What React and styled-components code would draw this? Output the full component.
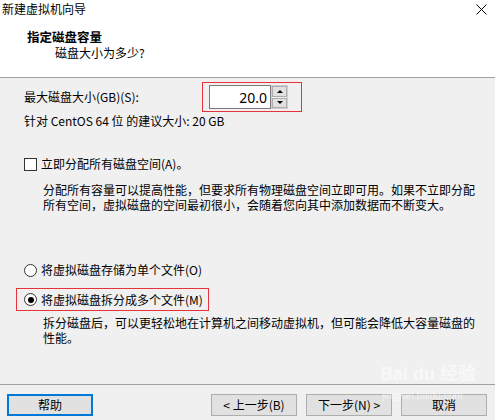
import React from "react";
import styled, { createGlobalStyle } from "styled-components";

const Global = createGlobalStyle`
  html, body { margin: 0; padding: 0; }
  body {
    background: #f0f0f0;
    font-family: "Noto Sans CJK SC", "Noto Sans", sans-serif;
    font-size: 12px;
    color: #000;
  }
`;

const Window = styled.div`
  position: relative;
  width: 495px;
  height: 420px;
  display: flex;
  flex-direction: column;
  background: #f0f0f0;
  overflow: hidden;
`;

const Header = styled.div`
  background: #fff;
  height: 77px;
  border-bottom: 1px solid #a0a0a0;
  display: flex;
  flex-direction: column;
`;

const TitleBar = styled.div`
  height: 18px;
  display: flex;
  align-items: center;
  justify-content: space-between;
  padding: 0 8px 0 2px;
  line-height: 18px;
`;

const CloseBtn = styled.svg`
  width: 11px;
  height: 11px;
`;

const HeaderTitle = styled.div`
  margin-top: 11px;
  padding-left: 27px;
  font-weight: bold;
  font-size: 12.5px;
  line-height: 16px;
`;

const HeaderSub = styled.div`
  padding-left: 55px;
  line-height: 16px;
`;

const Content = styled.div`
  flex: 1;
  display: flex;
  flex-direction: column;
`;

const SizeRow = styled.div`
  margin-top: 4px;
  height: 30px;
  display: flex;
  align-items: center;
  padding-left: 24px;
`;

const Label = styled.span`
  width: 178px;
  line-height: 16px;
`;

const Highlight = styled.div`
  border: 1px solid #e8323a;
  display: flex;
  align-items: center;
  box-sizing: border-box;
  height: ${(p) => p.$h}px;
  width: ${(p) => p.$w}px;
  padding-left: ${(p) => p.$pl}px;
  margin-left: ${(p) => p.$ml || 0}px;
  margin-top: ${(p) => p.$mt || 0}px;
`;

const NumInput = styled.div`
  box-sizing: border-box;
  width: 62px;
  height: 24px;
  border: 1px solid #7a7a7a;
  background: #fff;
  display: flex;
  align-items: center;
  justify-content: flex-end;
  padding-right: 3px;
  font-family: "Noto Sans", sans-serif;
  font-size: 14px;
`;

const Spinner = styled.div`
  display: flex;
  flex-direction: column;
  gap: 1px;
  width: 17px;
  height: 24px;
  box-sizing: border-box;
  border: 1px solid #cfcfcf;
  background: #f0f0f0;
`;

const SpinBtn = styled.div`
  flex: 1;
  background: #e1e1e1;
  border: 1px solid #adadad;
  display: flex;
  align-items: center;
  justify-content: center;
`;

const Tri = styled.div`
  width: 0;
  height: 0;
  border-left: 3px solid transparent;
  border-right: 3px solid transparent;
  ${(p) =>
    p.$up ? "border-bottom: 3px solid #000;" : "border-top: 3px solid #000;"}
`;

const Line = styled.div`
  margin-top: ${(p) => p.$mt || 0}px;
  padding-left: 24px;
  line-height: 16px;
`;

const OptionRow = styled.div`
  margin-top: ${(p) => p.$mt || 0}px;
  padding-left: ${(p) => (p.$pl === undefined ? 24 : p.$pl)}px;
  display: flex;
  align-items: center;
  gap: 4px;
  line-height: 16px;
`;

const Checkbox = styled.span`
  box-sizing: border-box;
  width: 13px;
  height: 13px;
  border: 1px solid #333;
  background: #fff;
`;

const Radio = styled.span`
  box-sizing: border-box;
  width: 13px;
  height: 13px;
  border: 1px solid #333;
  border-radius: 50%;
  background: #fff;
  display: flex;
  align-items: center;
  justify-content: center;
  &::after {
    content: "";
    width: 6px;
    height: 6px;
    border-radius: 50%;
    background: ${(p) => (p.$checked ? "#000" : "transparent")};
  }
`;

const Desc = styled.div`
  margin-top: ${(p) => p.$mt || 0}px;
  padding-left: 43px;
  line-height: 15px;
`;

const Footer = styled.div`
  margin-top: auto;
  border-top: 1px solid #a0a0a0;
  height: 36px;
  display: flex;
  padding: 9px 8px 0 7px;
  box-sizing: border-box;
  gap: 9px;
`;

const Button = styled.div`
  box-sizing: border-box;
  width: 86px;
  height: 22px;
  background: #e1e1e1;
  border: ${(p) => (p.$primary ? "2px solid #0078d7" : "1px solid #adadad")};
  display: flex;
  align-items: center;
  justify-content: center;
  line-height: 16px;
  white-space: nowrap;
  ${(p) => (p.$pushRight ? "margin-left: auto;" : "")}
`;

const Watermark = styled.div`
  position: absolute;
  left: 380px;
  top: 365px;
  color: rgba(255, 255, 255, 0.6);
  font-family: "Liberation Sans", "Noto Sans CJK SC", sans-serif;
  pointer-events: none;
  line-height: 1;
  white-space: nowrap;
`;

const WmMain = styled.div`
  font-size: 18px;
  font-weight: bold;
`;

const WmSub = styled.div`
  font-size: 10px;
  margin-top: 8px;
  margin-left: 2px;
`;

export default function App() {
  return (
    <Window>
      <Global />
      <Header>
        <TitleBar>
          <span>新建虚拟机向导</span>
          <CloseBtn viewBox="0 0 11 11">
            <path d="M0.5 0.5 L10.5 10.5 M10.5 0.5 L0.5 10.5" stroke="#000" strokeWidth="1" />
          </CloseBtn>
        </TitleBar>
        <HeaderTitle>指定磁盘容量</HeaderTitle>
        <HeaderSub>磁盘大小为多少?</HeaderSub>
      </Header>
      <Content>
        <SizeRow>
          <Label>最大磁盘大小(GB)(S):</Label>
          <Highlight $h={30} $w={100} $pl={6}>
            <NumInput>20.0</NumInput>
            <Spinner>
              <SpinBtn>
                <Tri $up />
              </SpinBtn>
              <SpinBtn>
                <Tri />
              </SpinBtn>
            </Spinner>
          </Highlight>
        </SizeRow>
        <Line $mt={1}>针对 CentOS 64 位 的建议大小: 20 GB</Line>
        <OptionRow $mt={27}>
          <Checkbox />
          <span>立即分配所有磁盘空间(A)。</span>
        </OptionRow>
        <Desc $mt={10}>
          分配所有容量可以提高性能，但要求所有物理磁盘空间立即可用。如果不立即分配
          <br />
          所有空间，虚拟磁盘的空间最初很小，会随着您向其中添加数据而不断变大。
        </Desc>
        <OptionRow $mt={50}>
          <Radio />
          <span>将虚拟磁盘存储为单个文件(O)</span>
        </OptionRow>
        <Highlight $h={23} $w={193} $pl={7} $ml={16} $mt={10}>
          <OptionRow $pl={0}>
            <Radio $checked />
            <span>将虚拟磁盘拆分成多个文件(M)</span>
          </OptionRow>
        </Highlight>
        <Desc $mt={4}>
          拆分磁盘后，可以更轻松地在计算机之间移动虚拟机，但可能会降低大容量磁盘的
          <br />
          性能。
        </Desc>
      </Content>
      <Footer>
        <Button $primary>帮助</Button>
        <Button $pushRight>&lt; 上一步(B)</Button>
        <Button>下一步(N) &gt;</Button>
        <Button>取消</Button>
      </Footer>
      <Watermark>
        <WmMain>Bai du 经验</WmMain>
        <WmSub>jingyan.baidu.com</WmSub>
      </Watermark>
    </Window>
  );
}
